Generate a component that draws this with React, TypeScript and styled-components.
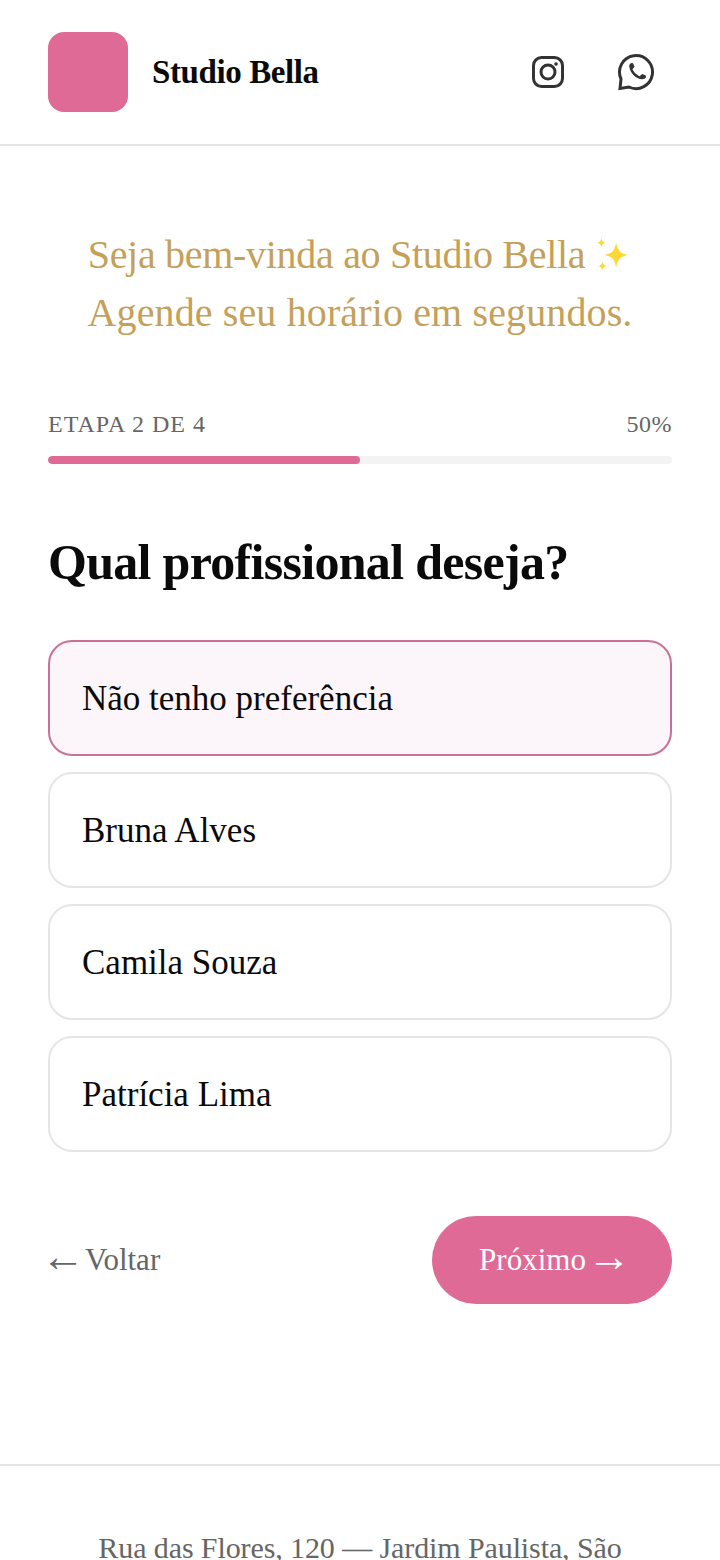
import { useState } from "react";
import styled, { createGlobalStyle } from "styled-components";

const serif = `"Liberation Serif", "DejaVu Serif", serif`;

const GlobalStyle = createGlobalStyle`
  html, body {
    margin: 0;
    padding: 0;
    background: #ffffff;
  }
  * {
    box-sizing: border-box;
  }
`;

const Page = styled.div`
  height: 100vh;
  overflow: hidden;
  font-family: ${serif};
  color: #0a0a0a;
  background: #ffffff;
`;

const Header = styled.header`
  height: 146px;
  padding: 0 64px 0 48px;
  display: flex;
  align-items: center;
  justify-content: space-between;
  border-bottom: 2px solid #e5e5e5;
`;

const Brand = styled.div`
  display: flex;
  align-items: center;
  gap: 24px;
`;

const Logo = styled.div`
  width: 80px;
  height: 80px;
  border-radius: 16px;
  background: #df6a96;
`;

const BrandName = styled.span`
  font-size: 33px;
  font-weight: 700;
  letter-spacing: -0.4px;
`;

const Socials = styled.nav`
  display: flex;
  align-items: center;
  gap: 48px;
  color: #333333;
`;

const Main = styled.main`
  padding: 80px 48px 160px;
`;

const Greeting = styled.p`
  margin: 0 0 66px;
  text-align: center;
  font-size: 40px;
  line-height: 58px;
  color: #c5a059;
`;

const GreetingLine = styled.span<{ $spacing: number }>`
  display: block;
  letter-spacing: ${(props) => props.$spacing}px;
`;

const Sparkles = styled.svg`
  width: 38px;
  height: 38px;
  vertical-align: -6px;
  margin-left: 9px;
`;

const ProgressLabels = styled.div`
  display: flex;
  justify-content: space-between;
  padding-top: 1px;
  font-size: 24px;
  line-height: 31px;
  color: #666666;
  margin-bottom: 16px;
`;

const StepLabel = styled.span`
  letter-spacing: 1px;
  text-transform: uppercase;
`;

const Percent = styled.span`
  letter-spacing: 0.5px;
`;

const Track = styled.div`
  height: 8px;
  border-radius: 4px;
  background: #f3f3f3;
  overflow: hidden;
`;

const Fill = styled.div`
  height: 100%;
  border-radius: 4px;
  background: #df6a96;
`;

const Question = styled.h2`
  margin: 64px 0 44px;
  font-size: 50px;
  line-height: 68px;
  font-weight: 700;
  letter-spacing: -0.7px;
`;

const Options = styled.div`
  display: flex;
  flex-direction: column;
  gap: 16px;
`;

const Option = styled.button<{ $selected?: boolean }>`
  height: 116px;
  padding: 2px 32px 0;
  text-align: left;
  font-family: inherit;
  font-size: 35px;
  color: #0a0a0a;
  border-radius: 24px;
  cursor: pointer;
  border: 2px solid ${(props) => (props.$selected ? "#c97197" : "#e5e5e5")};
  background: ${(props) => (props.$selected ? "#fcf5f9" : "#ffffff")};
`;

const Actions = styled.div`
  margin-top: 64px;
  display: flex;
  align-items: center;
  justify-content: space-between;
`;

const BackButton = styled.button`
  display: flex;
  align-items: center;
  margin-left: -7px;
  padding: 0;
  border: none;
  background: none;
  font-family: inherit;
  font-size: 31px;
  color: #666666;
  cursor: pointer;
`;

const NextButton = styled.button`
  display: flex;
  align-items: center;
  justify-content: center;
  gap: 1px;
  width: 240px;
  height: 88px;
  padding: 0 0 0 6px;
  border: none;
  border-radius: 44px;
  background: #df6a96;
  color: #ffffff;
  font-family: inherit;
  font-size: 31px;
  cursor: pointer;
`;

const Arrow = styled.span`
  padding-bottom: 7px;
  font-size: 44px;
  line-height: 1;
`;

const Footer = styled.footer`
  padding: 62px 64px;
  border-top: 2px solid #e5e5e5;
  text-align: center;
  font-size: 30px;
  line-height: 40px;
  letter-spacing: -0.1px;
  color: #666666;
`;

const InstagramIcon = () => (
  <svg width="40" height="40" viewBox="0 0 40 40" fill="none" stroke="currentColor" strokeWidth="3">
    <rect x="5.5" y="5.5" width="29" height="29" rx="8" />
    <circle cx="20" cy="20" r="7" />
    <circle cx="28" cy="12" r="1.8" fill="currentColor" stroke="none" />
  </svg>
);

const WhatsappIcon = () => (
  <svg width="40" height="40" viewBox="0 0 40 40" fill="none" stroke="currentColor" strokeWidth="3">
    <path d="M4 36.500 L5 26.900 A16.500 16.500 0 1 1 13 35 Z" strokeLinejoin="miter" />
    <path d="M14.500 14c.5 6 5.500 11.500 12 12" strokeWidth="2.500" strokeLinecap="round" />
    <path d="M13.500 13.500c0-1.500 1-2.500 2.500-2.500l1 .2 1.500 3.500-1.500 2-2.500.5zM27.500 27c1.500 0 2.500-1 2.500-2.500l-.2-1-3.500-1.500-2 1.500-.5 2.500z" fill="currentColor" stroke="none" />
  </svg>
);

const SparklesIcon = () => (
  <Sparkles viewBox="0 0 36 36">
    <path fill="#fdd835" d="M21 6c1.500 8 3.500 10.500 11 12-7.500 1.500-9.500 4-11 12-1.500-8-3.500-10.500-11-12 7.500-1.500 9.500-4 11-12z" />
    <path fill="#fdd835" d="M7 2c.6 3 1.400 3.900 4 4.500-2.600.6-3.400 1.500-4 4.500-.6-3-1.400-3.900-4-4.500 2.600-.6 3.400-1.500 4-4.500z" />
    <path fill="#fdd835" d="M8 24c.6 3 1.400 3.900 4 4.500-2.600.6-3.400 1.500-4 4.500-.6-3-1.400-3.900-4-4.500 2.600-.6 3.400-1.500 4-4.500z" />
  </Sparkles>
);

const professionals = ["Não tenho preferência", "Bruna Alves", "Camila Souza", "Patrícia Lima"];

export default function App() {
  const [selected, setSelected] = useState(professionals[0]);

  return (
    <Page>
      <GlobalStyle />
      <Header>
        <Brand>
          <Logo />
          <BrandName>Studio Bella</BrandName>
        </Brand>
        <Socials>
          <InstagramIcon />
          <WhatsappIcon />
        </Socials>
      </Header>
      <Main>
        <Greeting>
          <GreetingLine $spacing={-0.3}>
            Seja bem-vinda ao Studio Bella
            <SparklesIcon />
          </GreetingLine>
          <GreetingLine $spacing={0.13}>Agende seu horário em segundos.</GreetingLine>
        </Greeting>
        <ProgressLabels>
          <StepLabel>Etapa 2 de 4</StepLabel>
          <Percent>50%</Percent>
        </ProgressLabels>
        <Track>
          <Fill style={{ width: "50%" }} />
        </Track>
        <Question>Qual profissional deseja?</Question>
        <Options>
          {professionals.map((name) => (
            <Option key={name} $selected={name === selected} onClick={() => setSelected(name)}>
              {name}
            </Option>
          ))}
        </Options>
        <Actions>
          <BackButton>
            <Arrow>←</Arrow>
            Voltar
          </BackButton>
          <NextButton>
            Próximo
            <Arrow>→</Arrow>
          </NextButton>
        </Actions>
      </Main>
      <Footer>Rua das Flores, 120 — Jardim Paulista, São Paulo</Footer>
    </Page>
  );
}
